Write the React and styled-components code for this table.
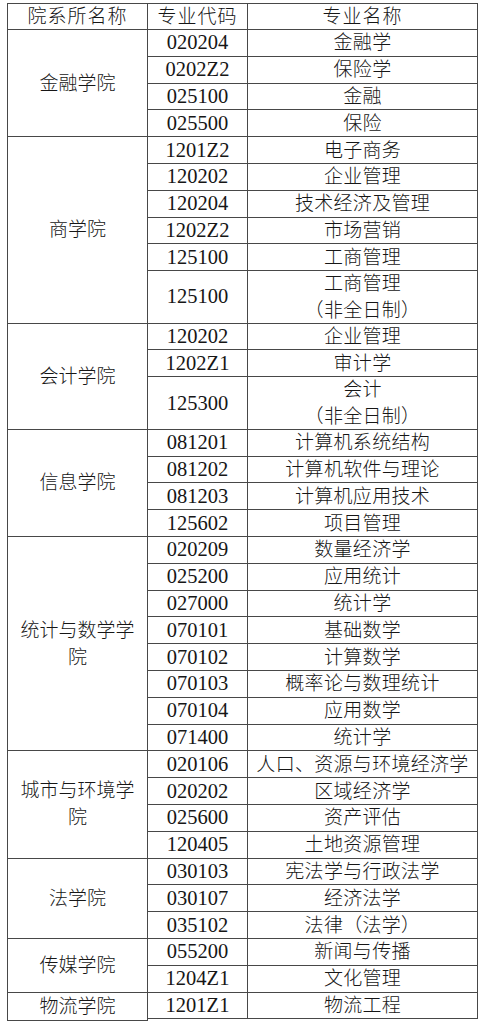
import React from 'react';
import styled, { createGlobalStyle } from 'styled-components';

const GlobalStyle = createGlobalStyle`
    html, body {
        margin: 0;
        padding: 0;
        background: #fff;
    }
    body {
        font-family: "Liberation Serif", "Noto Sans CJK SC", serif;
        color: #161616;
    }
`;

const Page = styled.div`
    padding: 3px 0 0 7px;
`;

const Grid = styled.div`
    display: grid;
    grid-template-columns: 140px 100px 230px;
    width: 470px;
    border-top: 1px solid #484848;
    border-left: 1px solid #484848;
`;

const Cell = styled.div`
    box-sizing: border-box;
    border-right: 1px solid #484848;
    border-bottom: 1px solid #484848;
    display: flex;
    align-items: center;
    justify-content: center;
    text-align: center;
    font-size: 19px;
    font-weight: 300;
    line-height: 27px;
`;

const HeadCell = styled(Cell)`
    height: 26px;
    letter-spacing: 1px;
`;

const GroupCell = styled(Cell)`
    grid-column: 1;
    grid-row: span ${(p) => p.$span};
    padding: 0 10px;
`;

const CodeCell = styled(Cell)`
    grid-column: 2;
    height: ${(p) => (p.$tall ? '52.5px' : '26.8px')};
    font-size: 20.5px;
    font-weight: 400;
`;

const NameCell = styled(Cell)`
    grid-column: 3;
    height: ${(p) => (p.$tall ? '52.5px' : '26.8px')};
    white-space: nowrap;
    letter-spacing: 0.3px;
`;

const NameLines = styled.div`
    display: flex;
    flex-direction: column;
    align-items: center;
    line-height: 27px;
`;

const groups = [
    {
        name: '金融学院',
        rows: [
            ['020204', '金融学'],
            ['0202Z2', '保险学'],
            ['025100', '金融'],
            ['025500', '保险'],
        ],
    },
    {
        name: '商学院',
        rows: [
            ['1201Z2', '电子商务'],
            ['120202', '企业管理'],
            ['120204', '技术经济及管理'],
            ['1202Z2', '市场营销'],
            ['125100', '工商管理'],
            ['125100', '工商管理', '（非全日制）'],
        ],
    },
    {
        name: '会计学院',
        rows: [
            ['120202', '企业管理'],
            ['1202Z1', '审计学'],
            ['125300', '会计', '（非全日制）'],
        ],
    },
    {
        name: '信息学院',
        rows: [
            ['081201', '计算机系统结构'],
            ['081202', '计算机软件与理论'],
            ['081203', '计算机应用技术'],
            ['125602', '项目管理'],
        ],
    },
    {
        name: '统计与数学学院',
        rows: [
            ['020209', '数量经济学'],
            ['025200', '应用统计'],
            ['027000', '统计学'],
            ['070101', '基础数学'],
            ['070102', '计算数学'],
            ['070103', '概率论与数理统计'],
            ['070104', '应用数学'],
            ['071400', '统计学'],
        ],
    },
    {
        name: '城市与环境学院',
        rows: [
            ['020106', '人口、资源与环境经济学'],
            ['020202', '区域经济学'],
            ['025600', '资产评估'],
            ['120405', '土地资源管理'],
        ],
    },
    {
        name: '法学院',
        rows: [
            ['030103', '宪法学与行政法学'],
            ['030107', '经济法学'],
            ['035102', '法律（法学）'],
        ],
    },
    {
        name: '传媒学院',
        rows: [
            ['055200', '新闻与传播'],
            ['1204Z1', '文化管理'],
        ],
    },
    {
        name: '物流学院',
        rows: [['1201Z1', '物流工程']],
    },
];

export default function App() {
    return (
        <Page>
            <GlobalStyle />
            <Grid>
                <HeadCell>院系所名称</HeadCell>
                <HeadCell>专业代码</HeadCell>
                <HeadCell>专业名称</HeadCell>
                {groups.map((g) => (
                    <React.Fragment key={g.name}>
                        <GroupCell $span={g.rows.length}>{g.name}</GroupCell>
                        {g.rows.map(([code, name, extra], i) => (
                            <React.Fragment key={i}>
                                <CodeCell $tall={!!extra}>{code}</CodeCell>
                                <NameCell $tall={!!extra}>
                                    {extra ? (
                                        <NameLines>
                                            <span>{name}</span>
                                            <span>{extra}</span>
                                        </NameLines>
                                    ) : (
                                        name
                                    )}
                                </NameCell>
                            </React.Fragment>
                        ))}
                    </React.Fragment>
                ))}
            </Grid>
        </Page>
    );
}
